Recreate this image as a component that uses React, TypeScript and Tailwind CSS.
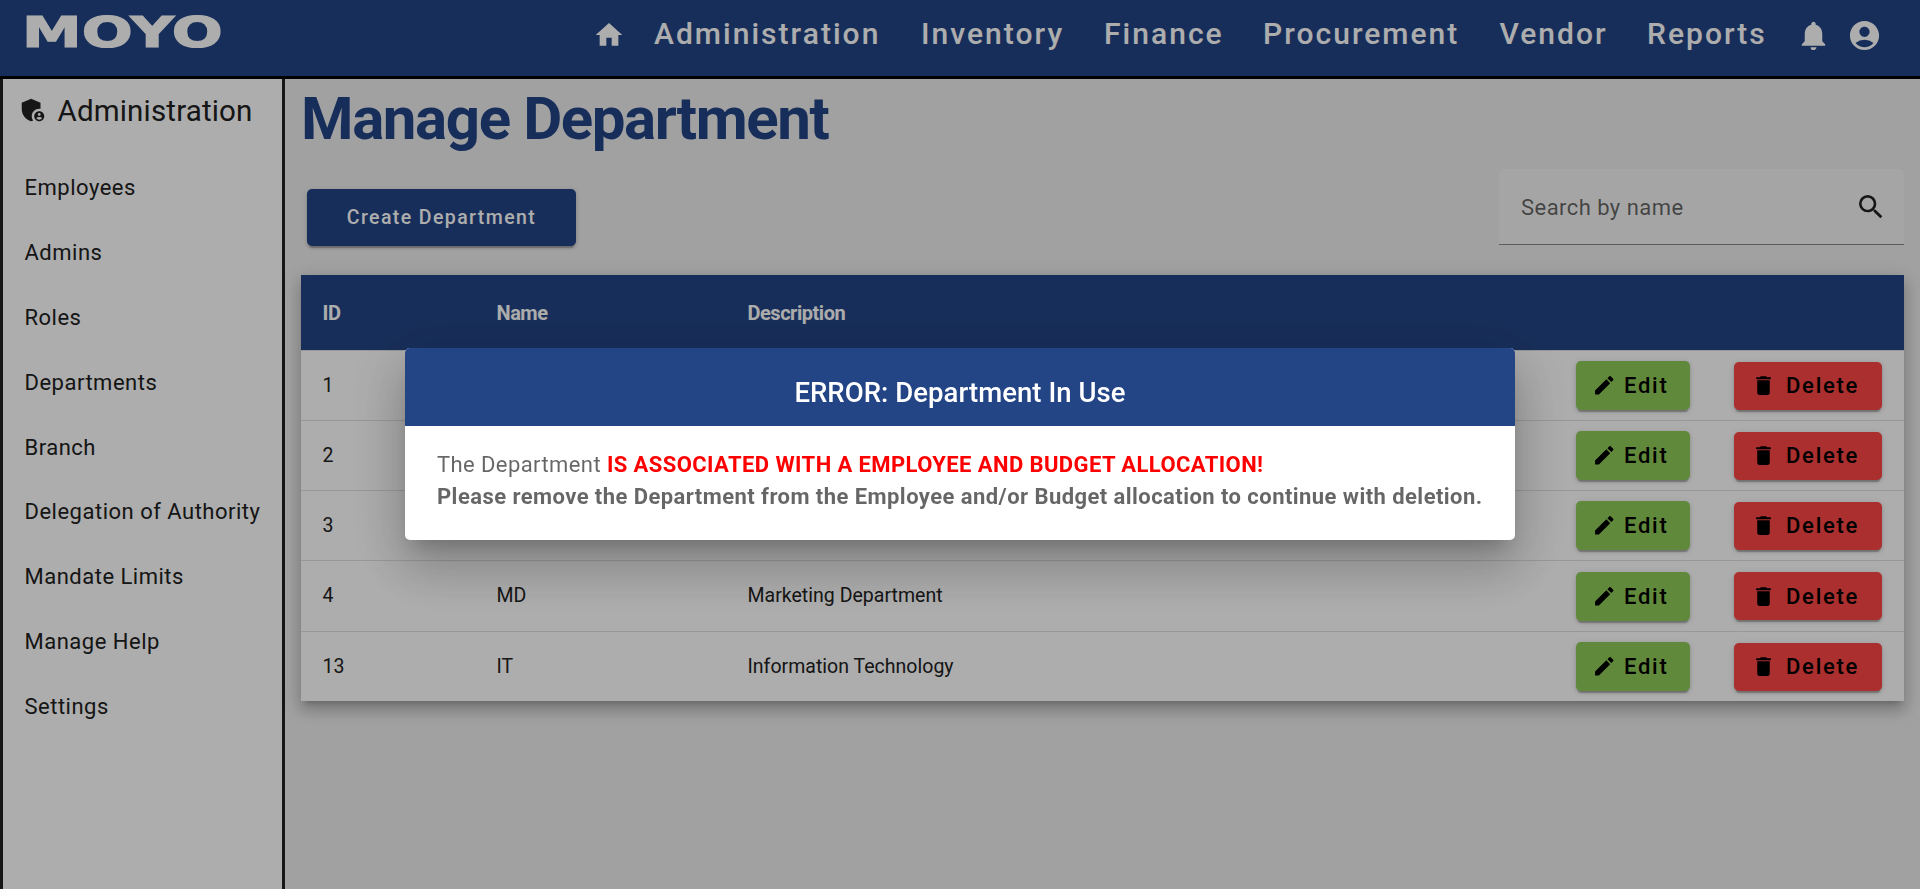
import React from 'react';
import {
  MdAccountCircle,
  MdAdminPanelSettings,
  MdDelete,
  MdEdit,
  MdHome,
  MdNotifications,
  MdSearch,
} from 'react-icons/md';

const navItems = [
  { label: 'Administration', width: 'w-[267px]' },
  { label: 'Inventory', width: 'w-[183px]' },
  { label: 'Finance', width: 'w-[159px]' },
  { label: 'Procurement', width: 'w-[236.5px]' },
  { label: 'Vendor', width: 'w-[147.5px]' },
  { label: 'Reports', width: 'w-[149px]' },
];

const sideItems = [
  'Employees',
  'Admins',
  'Roles',
  'Departments',
  'Branch',
  'Delegation of Authority',
  'Mandate Limits',
  'Manage Help',
  'Settings',
];

const departments = [
  { id: 1, name: '', description: '', height: 'h-[70px]' },
  { id: 2, name: '', description: '', height: 'h-[70px]' },
  { id: 3, name: '', description: '', height: 'h-[70px]' },
  { id: 4, name: 'MD', description: 'Marketing Department', height: 'h-[71px]' },
  { id: 13, name: 'IT', description: 'Information Technology', height: 'h-[69px]' },
];

const raised =
  'shadow-[0_4px_1px_-2px_rgba(0,0,0,0.2),0_2px_3px_0_rgba(0,0,0,0.14),0_1px_6px_0_rgba(0,0,0,0.12)]';

function Header() {
  return (
    <header className="flex h-[79px] shrink-0 items-start border-b-[3px] border-black bg-[#234586] text-white">
      <div className="ml-[22px] h-[64px] w-[200px]">
        <span className="block w-max origin-left scale-x-[1.395] font-['DejaVu_Sans'] text-[43px] leading-[65px] font-bold [-webkit-text-stroke:1.2px_white]">
          MOYO
        </span>
      </div>
      <nav className="ml-auto flex items-start">
        <MdHome className="mt-[19px] mr-[29px] size-[32px]" />
        {navItems.map((item) => (
          <a
            key={item.label}
            className={`${item.width} text-[30px] leading-[68px] font-medium tracking-[2.03px] whitespace-nowrap`}
          >
            {item.label}
          </a>
        ))}
        <MdNotifications className="mt-[18px] size-[35px]" />
        <MdAccountCircle className="mt-[18px] mr-[38px] ml-[16px] size-[35px]" />
      </nav>
    </header>
  );
}

function Sidebar() {
  return (
    <aside className="w-[285px] shrink-0 border-x-[3px] border-[#212121] bg-white text-[#212121]">
      <h2 className="flex h-[76px] items-center pb-[12px] pl-[15px] text-[29.5px] leading-[64px] tracking-[0.17px]">
        <MdAdminPanelSettings className="mt-[-3px] mr-[9.5px] size-[30px]" />
        Administration
      </h2>
      <ul>
        {sideItems.map((item) => (
          <li
            key={item}
            className="h-[64.9px] pl-[21.5px] text-[22px] leading-[65px] tracking-[0.5px] whitespace-nowrap"
          >
            {item}
          </li>
        ))}
      </ul>
    </aside>
  );
}

function DepartmentTable() {
  return (
    <div className="bg-white text-[19.5px] tracking-[0.02px] text-[#212121] shadow-[0_6px_6px_-4px_rgba(0,0,0,0.2),0_10px_13px_1px_rgba(0,0,0,0.14),0_4px_18px_3px_rgba(0,0,0,0.12)]">
      <div className="flex h-[76px] items-center border-b border-[#e0e0e0] bg-[#234586] bg-clip-padding pl-[21.5px] text-[20px] font-bold tracking-[-0.47px] text-white">
        <div className="w-[174px] pt-px">ID</div>
        <div className="w-[251px] pt-px">Name</div>
        <div className="pt-px">Description</div>
      </div>
      {departments.map((row, index) => (
        <div
          key={row.id}
          className={`${row.height} flex items-center pr-[22px] pl-[21.5px] ${
            index < departments.length - 1 ? 'border-b border-[#e0e0e0]' : ''
          }`}
        >
          <div className="w-[174px]">{row.id}</div>
          <div className="w-[251px]">{row.name}</div>
          <div className="flex-1">{row.description}</div>
          <button
            className={`mr-[44px] flex h-[49px] w-[114px] items-center rounded-[5px] bg-[#90cb58] pl-[16px] text-[22px] font-medium tracking-[1.75px] text-black ${raised}`}
          >
            <MdEdit className="mr-[7.5px] size-[24.5px]" />
            Edit
          </button>
          <button
            className={`flex h-[48px] w-[148px] items-center rounded-[5px] bg-[#fb4644] pl-[17px] text-[22px] font-medium tracking-[1.75px] text-black ${raised}`}
          >
            <MdDelete className="mr-[10px] size-[25px]" />
            Delete
          </button>
        </div>
      ))}
    </div>
  );
}

function ErrorDialog() {
  return (
    <div className="fixed inset-0 flex items-center justify-center bg-black/32">
      <div
        role="dialog"
        className="mt-[-1px] h-[192px] w-[1110px] overflow-hidden rounded-[5px] bg-white shadow-[0_14px_19px_-9px_rgba(0,0,0,0.2),0_30px_48px_4px_rgba(0,0,0,0.14),0_11px_58px_10px_rgba(0,0,0,0.12)]"
      >
        <h2 className="h-[78px] bg-[#234586] pt-[12px] text-center text-[27.5px] leading-[66px] font-medium tracking-[0.06px] text-white">
          ERROR: Department In Use
        </h2>
        <div className="pt-[23px] pl-[32px] text-[22px] leading-[32px] tracking-[0.41px] whitespace-nowrap text-black/60">
          <p>
            The Department{' '}
            <b className="text-[#ff0000]">IS ASSOCIATED WITH A EMPLOYEE AND BUDGET ALLOCATION!</b>
          </p>
          <p className="font-bold tracking-[0.44px]">
            Please remove the Department from the Employee and/or Budget allocation to continue with
            deletion.
          </p>
        </div>
      </div>
    </div>
  );
}

export default function App() {
  return (
    <div className="flex h-[889px] flex-col overflow-hidden bg-[#eeeeee] font-[Roboto,sans-serif]">
      <Header />
      <div className="flex min-h-0 flex-1">
        <Sidebar />
        <main className="min-w-0 flex-1 pr-[16px] pl-[16px]">
          <h1 className="h-[90px] text-[60px] leading-[79px] font-bold tracking-[-1.4px] text-[#234586]">
            Manage Department
          </h1>
          <div className="flex h-[106px] items-start justify-between">
            <button
              className={`mt-[20px] ml-[6px] h-[57px] w-[269px] rounded-[5px] bg-[#234586] text-[19.5px] font-medium tracking-[1.4px] text-white ${raised}`}
            >
              Create Department
            </button>
            <div className="flex h-[76px] w-[405px] items-center justify-between rounded-t-[5px] border-b border-[#8a8a8a] bg-[#f4f4f4] pr-[17px] pl-[22px] text-[22px] tracking-[0.45px] text-black/60">
              <span className="pt-[2px]">Search by name</span>
              <MdSearch className="size-[32px] text-[#212121]" />
            </div>
          </div>
          <DepartmentTable />
        </main>
      </div>
      <ErrorDialog />
    </div>
  );
}
